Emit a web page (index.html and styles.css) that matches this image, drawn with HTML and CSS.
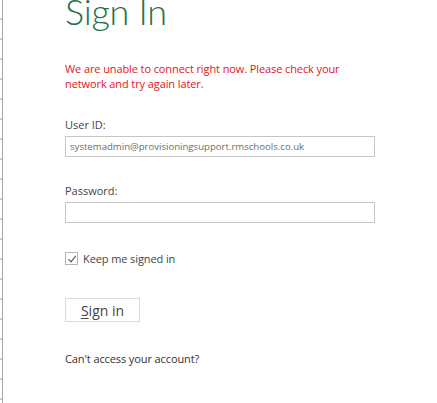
FILE: index.html
```html
<!DOCTYPE html>
<html lang="en">
<head>
  <meta charset="UTF-8" />
  <title>Sign In</title>
  <link rel="stylesheet" href="styles.css">
</head>
<body>
  <div class="page">
    <div class="edge"></div>
    <div class="form">
      <h1>Sign In</h1>
      <p class="error">We are unable to connect right now. Please check your network and try again later.</p>

      <label class="label" for="user">User ID:</label>
      <input id="user" class="field" value="systemadmin@provisioningsupport.rmschools.co.uk" />

      <label class="label pass" for="pass">Password:</label>
      <input id="pass" class="field" type="password" />

      <div class="keep">
        <span class="box">
          <svg width="10" height="10" viewBox="0 0 10 10"><path d="M1.5 5.2 L4 7.8 L8.8 1.8" fill="none" stroke="#555" stroke-width="1.1"/></svg>
        </span>
        <span>Keep me signed in</span>
      </div>

      <button class="btn"><u>S</u>ign in</button>

      <a class="help">Can't access your account?</a>
    </div>
  </div>
</body>
</html>
```

FILE: styles.css
```css
body { margin: 0; background: #fff; font-family: "Open Sans", "Noto Sans", sans-serif; color: #444; overflow: hidden; }
.page { display: flex; height: 403px; }
.edge { width: 2px; border-right: 1px solid #a8a8a8; background: repeating-linear-gradient(to bottom, transparent 0, transparent 18px, #ccc 18px, #ccc 20px); }
.form { padding-left: 62px; width: 310px; display: flex; flex-direction: column; align-items: flex-start; }
h1 { font-family: Lato, "Open Sans", sans-serif; font-weight: 300; font-size: 36px; letter-spacing: -0.3px; color: #217346; margin: -11px 0 0 0; line-height: 44px; }
.error { color: #e81123; font-size: 11px; line-height: 14.5px; margin: 29px 0 0 0; width: 300px; letter-spacing: -0.1px; }
.label { font-size: 11px; line-height: 15px; margin-top: 26px; color: #444; }
.label.pass { margin-top: 26px; }
.field { width: 310px; height: 21px; box-sizing: border-box; margin: 4px 0 0 0; border: 1px solid #c6c6c6; padding: 0 4px; font-family: inherit; font-size: 9.6px; color: #6e6e6e; outline: none; }
.keep { display: flex; align-items: center; gap: 5px; margin-top: 28px; font-size: 11px; letter-spacing: -0.1px; }
.box { width: 11px; height: 11px; border: 1px solid #b5b5b5; display: flex; align-items: center; justify-content: center; }
.btn { margin-top: 32px; width: 75px; height: 24px; background: #fff; border: 1px solid #dcdcdc; font-family: inherit; font-size: 14px; color: #444; padding: 0; }
.btn u { text-underline-offset: 2px; }
.help { margin-top: 29px; font-size: 11px; color: #333; letter-spacing: -0.1px; }
```
